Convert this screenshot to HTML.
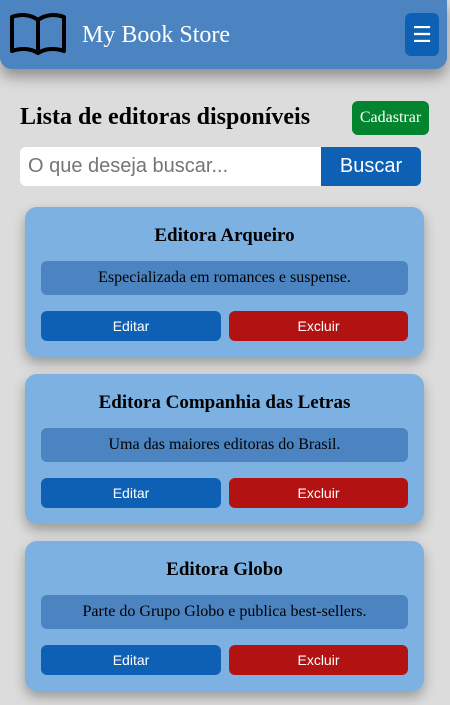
<!DOCTYPE html>
<html><head><meta charset="utf-8"><style>
*{box-sizing:border-box;margin:0;padding:0}
body{width:450px;height:705px;overflow:hidden;background:#dcdcdc;font-family:"Liberation Serif",serif;position:relative}
.hdr{position:absolute;left:0;top:0;width:447px;height:69px;background:#4b84c0;border-radius:0 0 12px 12px;box-shadow:0 8px 14px rgba(0,0,0,.35)}
.hdr svg{position:absolute;left:10px;top:12px}
.title{position:absolute;left:82px;top:22px;color:#fff;font-size:24px}
.menu{position:absolute;left:405px;top:13px;width:34px;height:43px;background:#0d60b3;border-radius:6px;color:#fff;font-size:22px;text-align:center;line-height:45px;font-family:"DejaVu Sans",sans-serif}
h1{position:absolute;left:20px;top:104px;font-size:24px;font-weight:bold;color:#000}
.cad{position:absolute;left:352px;top:101px;width:77px;height:34px;background:#03842e;border-radius:6px;color:#fff;font-size:16px;text-align:center;line-height:34px}
.inp{position:absolute;left:20px;top:147px;width:301px;height:39px;background:#fff;border-radius:6px 0 0 6px;color:#757575;font-family:"Liberation Sans",sans-serif;font-size:20px;line-height:39px;padding-left:8px}
.bus{position:absolute;left:321px;top:147px;width:100px;height:39px;background:#0d60b3;border-radius:0 6px 6px 0;color:#fff;font-family:"Liberation Sans",sans-serif;font-size:20px;line-height:39px;text-align:center}
.card{position:absolute;left:25px;width:399px;height:150px;background:#7db1e2;border-radius:12px;box-shadow:0 6px 12px rgba(0,0,0,.3)}
.card h2{position:absolute;left:0;right:0;top:18px;text-align:center;font-size:19px;font-weight:bold}
.desc{position:absolute;left:16px;top:54px;width:367px;height:34px;background:#4b84c0;border-radius:6px;text-align:center;line-height:34px;font-size:16px}
.b{position:absolute;top:104px;height:30px;border-radius:6px;color:#fff;font-family:"Liberation Sans",sans-serif;font-size:14px;text-align:center;line-height:30px}
.e{left:16px;width:180px;background:#0d60b3}
.x{left:204px;width:179px;background:#b31212}
</style></head><body>
<div class="hdr">
<svg width="56" height="43" viewBox="0 0 56 43"><path d="M28 8 C20 2 10 2 2 5 V39 C10 36 20 36 28 41 C36 36 46 36 54 39 V5 C46 2 36 2 28 8 Z M28 8 V41" fill="none" stroke="#000" stroke-width="4" stroke-linejoin="round"/></svg>
<div class="title">My Book Store</div>
<div class="menu">☰</div>
</div>
<h1>Lista de editoras disponíveis</h1>
<div class="cad">Cadastrar</div>
<div class="inp">O que deseja buscar...</div>
<div class="bus">Buscar</div>
<div class="card" style="top:207px"><h2>Editora Arqueiro</h2><div class="desc">Especializada em romances e suspense.</div><div class="b e">Editar</div><div class="b x">Excluir</div></div>
<div class="card" style="top:374px"><h2>Editora Companhia das Letras</h2><div class="desc">Uma das maiores editoras do Brasil.</div><div class="b e">Editar</div><div class="b x">Excluir</div></div>
<div class="card" style="top:541px"><h2>Editora Globo</h2><div class="desc">Parte do Grupo Globo e publica best-sellers.</div><div class="b e">Editar</div><div class="b x">Excluir</div></div>
</body></html>
